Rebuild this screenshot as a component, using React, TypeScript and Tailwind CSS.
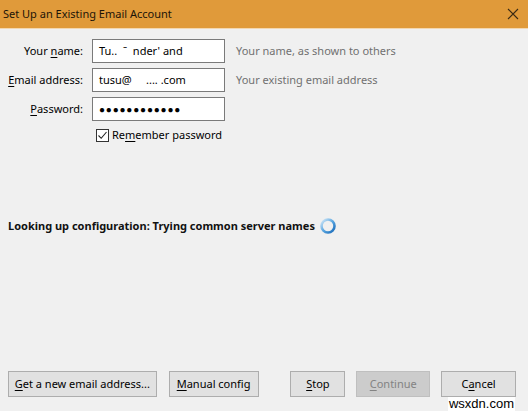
import React from "react";

const font = { fontFamily: '"Noto Sans", "Liberation Sans", sans-serif' };

function Row({ ul, rest, pre, value, hint }: { pre?: string; ul: string; rest: string; value: React.ReactNode; hint?: string }) {
  return (
    <div className="flex items-center h-[24px] whitespace-nowrap">
      <div className="w-[84px] text-right pr-[1px] text-[11px] text-[#000]">
        {pre}<span className="underline underline-offset-2">{ul}</span>{rest}
      </div>
      <div className="ml-[8px] w-[133px] h-[24px] border border-[#7a7a7a] bg-white flex items-center px-[6px] text-[11px] text-black">
        {value}
      </div>
      {hint && <div className="ml-[11px] text-[11px] text-[#707070]">{hint}</div>}
    </div>
  );
}

function Btn({ children, w, disabled }: { children: React.ReactNode; w: string; disabled?: boolean }) {
  return (
    <div
      className={`${w} h-[26px] flex items-center justify-center text-[11px] whitespace-nowrap border ${
        disabled ? "bg-[#cccccc] border-[#bfbfbf] text-[#838383]" : "bg-[#e1e1e1] border-[#adadad] text-black"
      }`}
    >
      {children}
    </div>
  );
}

export default function App() {
  return (
    <div className="w-[528px] h-[411px] bg-[#f0f0f0] flex flex-col relative overflow-hidden" style={font}>
      <div className="h-[29px] bg-[#e09a3a] flex items-center justify-between pl-[3px] pr-[9px] border-b border-[#f3d7b0]">
        <span className="text-[11px] text-[#1c1408]">Set Up an Existing Email Account</span>
        <svg width="12" height="12" viewBox="0 0 12 12">
          <path d="M1 1 L11 11 M11 1 L1 11" stroke="#3a2a14" strokeWidth="1.1" />
        </svg>
      </div>
      <div className="flex flex-col gap-[5px] mt-[10px]">
        <Row pre="Your " ul="n" rest="ame:" value={<span>Tu.. &nbsp;ˉ&nbsp;&nbsp;nder' and</span>} hint="Your name, as shown to others" />
        <Row ul="E" rest="mail address:" value={<span>tusu@ &nbsp;&nbsp;&nbsp;&nbsp;.... .com</span>} hint="Your existing email address" />
        <Row ul="P" rest="assword:" value={<span className="text-[10px] tracking-[0.8px] leading-none">●●●●●●●●●●●●</span>} />
      </div>
      <div className="flex items-center ml-[96px] mt-[6px] h-[16px]">
        <div className="w-[13px] h-[13px] border border-[#333] bg-white flex items-center justify-center">
          <svg width="11" height="11" viewBox="0 0 11 11">
            <path d="M1.5 5.5 L4.2 8.3 L9.5 2" stroke="#222" strokeWidth="1.1" fill="none" />
          </svg>
        </div>
        <span className="ml-[3px] text-[11px] text-black whitespace-nowrap">
          Re<span className="underline underline-offset-2">m</span>ember password
        </span>
      </div>
      <div className="flex items-center ml-[8px] mt-[73px] h-[20px]">
        <span className="text-[11px] font-bold text-[#111] whitespace-nowrap">Looking up configuration: Trying common server names</span>
        <svg className="ml-[4px]" width="18" height="18" viewBox="0 0 18 18">
          <defs>
            <linearGradient id="g" x1="0" y1="0" x2="1" y2="1">
              <stop offset="0" stopColor="#d6eaf8" />
              <stop offset="0.5" stopColor="#5aa6e0" />
              <stop offset="1" stopColor="#1668b8" />
            </linearGradient>
          </defs>
          <circle cx="9" cy="9" r="6.5" fill="none" stroke="url(#g)" strokeWidth="2.6" />
        </svg>
      </div>
      <div className="flex-1" />
      <div className="flex items-center pl-[8px] pr-[12px] mb-[14px]">
        <Btn w="w-[149px]"><span><span className="underline underline-offset-2">G</span>et a new email address...</span></Btn>
        <div className="w-[12px]" />
        <Btn w="w-[90px]"><span><span className="underline underline-offset-2">M</span>anual config</span></Btn>
        <div className="w-[32px]" />
        <Btn w="w-[55px]"><span><span className="underline underline-offset-2">S</span>top</span></Btn>
        <div className="w-[11px]" />
        <Btn w="w-[74px]" disabled><span><span className="underline underline-offset-2">C</span>ontinue</span></Btn>
        <div className="w-[11px]" />
        <Btn w="w-[75px]"><span>C<span className="underline underline-offset-2">a</span>ncel</span></Btn>
      </div>
      <div className="absolute right-[13px] bottom-[0px] text-[13px] leading-[14px] text-black bg-white px-[1px]" style={{ fontFamily: '"Liberation Sans", sans-serif' }}>
        wsxdn.com
      </div>
    </div>
  );
}
